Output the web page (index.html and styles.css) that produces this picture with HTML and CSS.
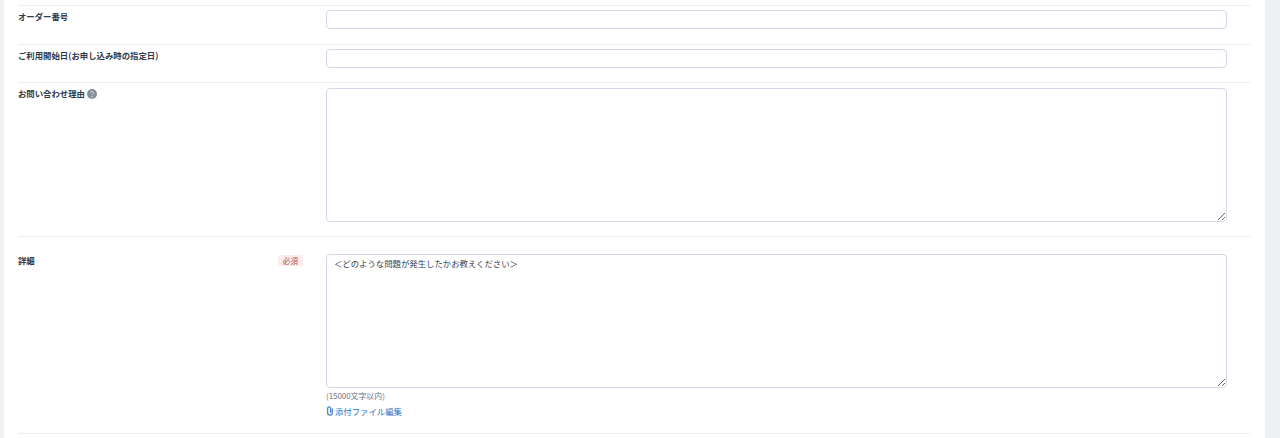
FILE: index.html
```html
<!DOCTYPE html>
<html lang="ja">
<head>
    <meta charset="UTF-8">
    <meta name="viewport" content="width=device-width, initial-scale=1.0">
    <title>お問い合わせ</title>
    <link rel="stylesheet" href="styles.css">
</head>
<body>
    <div class="card">
        <div class="row row-first">
            <div class="label"><span class="label-text">オーダー番号</span></div>
            <div class="field"><input type="text" class="input"></div>
        </div>
        <div class="row row-second">
            <div class="label"><span class="label-text">ご利用開始日(お申し込み時の指定日)</span></div>
            <div class="field"><input type="text" class="input"></div>
        </div>
        <div class="row row-reason">
            <div class="label">
                <span class="label-text">お問い合わせ理由</span>
                <svg class="help" viewBox="0 0 10 10" width="10" height="10">
                    <circle cx="5" cy="5" r="5" fill="#858f9c"/>
                    <path d="M3.5 4c0-1 .7-1.6 1.6-1.6S6.6 3 6.6 3.8C6.6 5 5 5 5 6.2" fill="none" stroke="#d5dbe2" stroke-width="1"/>
                    <circle cx="5" cy="7.7" r=".7" fill="#d5dbe2"/>
                </svg>
            </div>
            <div class="field"><textarea class="input area"></textarea></div>
        </div>
        <div class="row row-detail">
            <div class="label">
                <span class="label-text">詳細</span>
                <span class="required">必須</span>
            </div>
            <div class="field">
                <textarea class="input area">＜どのような問題が発生したかお教えください＞</textarea>
                <div class="note">(15000文字以内)</div>
                <a class="attach" href="#">
                    <svg class="clip" viewBox="0 0 8 10" width="8" height="10">
                        <path d="M6.4 2.6v4.2a2.4 2.4 0 0 1-4.8 0V2.4a1.5 1.5 0 0 1 3 0v4.4" fill="none" stroke="#4a86d0" stroke-width="1.3"/>
                    </svg>添付ファイル編集
                </a>
            </div>
        </div>
        <div class="row row-end"></div>
    </div>
</body>
</html>
```

FILE: styles.css
```css
html, body {
    height: 438px;
    overflow: hidden;
}
body {
    margin: 0;
    background: #eef0f3;
    font-family: "Noto Sans CJK JP", "Noto Sans", sans-serif;
    color: #3a4250;
}
.card {
    width: 1233px;
    height: 438px;
    margin-left: 4px;
    padding: 5px 14px 0 14px;
    background: #fff;
}
.row {
    display: flex;
    box-sizing: border-box;
    border-top: 1px solid #e9ecf1;
}
.row-first {
    height: 39px;
    padding-top: 4px;
}
.row-second {
    height: 38px;
    padding-top: 4px;
}
.row-reason {
    height: 154px;
    padding-top: 4px;
}
.row-reason .field {
    padding-top: 1px;
}
.row-detail {
    height: 197px;
    padding-top: 17px;
}
.label {
    width: 285px;
    flex: none;
    display: flex;
    align-items: flex-start;
    font-size: 8.4px;
    line-height: 13px;
    font-weight: 700;
}
.label-text {
    color: #333b48;
}
.row-reason .label {
    gap: 2px;
}
.help {
    margin-top: 2px;
}
.row-detail .label {
    justify-content: space-between;
}
.required {
    background: #fdecec;
    color: #b4534f;
    font-size: 7.6px;
    font-weight: 400;
    line-height: 11px;
    padding: 0 5px;
    border-radius: 2px;
    margin-top: 1px;
}
.field {
    margin-left: 23px;
    width: 901px;
}
.input {
    display: block;
    width: 901px;
    height: 19px;
    box-sizing: border-box;
    margin: 0;
    padding: 1px 7px;
    border: 1px solid #d3d8e6;
    border-radius: 4px;
    background: #fff;
    font-family: inherit;
    font-size: 8.4px;
    line-height: 15px;
    color: #3a4250;
}
.area {
    height: 134px;
}
.note {
    margin-top: 2px;
    font-size: 7.9px;
    line-height: 11px;
    color: #6b7380;
}
.attach {
    display: block;
    margin-top: 4px;
    font-size: 8.4px;
    line-height: 13px;
    color: #2f6fc4;
    text-decoration: none;
}
.clip {
    vertical-align: -1px;
    margin-right: 1px;
}
```
